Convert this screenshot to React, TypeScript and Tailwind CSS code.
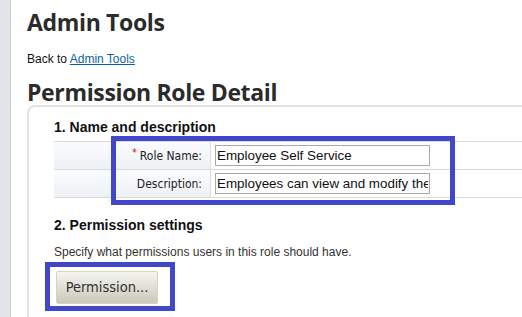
export default function App() {
  const heading = "font-['Open_Sans',sans-serif] font-bold text-[23px] leading-[28px] tracking-[-0.35px] text-[#2b2b2b]";
  const label = "font-['DejaVu_Sans_Condensed','DejaVu_Sans',sans-serif] text-[12px] text-[#222]";

  return (
    <div className="relative flex w-[522px] h-[317px] overflow-hidden bg-white font-['Liberation_Sans',Arial,sans-serif]">
      <div className="w-[11px] shrink-0 bg-[#e2e5e9] border-r border-[#c9ccd1]" />

      <div className="flex-1 pl-[16px]">
        <h1 className={`mt-[8px] ${heading}`}>Admin Tools</h1>
        <p className="mt-[15px] text-[12px] leading-[16px] text-[#111]">
          Back to{" "}
          <a href="#" className="text-[#0b5fa5] underline">
            Admin Tools
          </a>
        </p>
        <h1 className={`mt-[11px] ${heading}`}>Permission Role Detail</h1>

        <div className="mt-[-1px] w-[600px] h-[240px] border-t-2 border-l-2 border-[#e3e3e3] rounded-tl-[8px] pl-[25px]">
          <h2 className="mt-[11px] text-[14px] leading-[18px] font-bold text-[#111]">1. Name and description</h2>

          <div className="mt-[5px] border-b border-[#d9d9d9]">
            <div className="flex h-[28px] border-t border-[#d9d9d9]">
              <div className={`w-[157px] shrink-0 flex items-center justify-end pr-[8px] border-r border-[#dcdcdc] bg-linear-to-b from-[#fbfcfd] to-[#edf1f5] ${label}`}>
                <span className="text-[#e00000] text-[10px] mr-[3px] -translate-y-[3px]">*</span>
                Role Name:
              </div>
              <div className="flex items-center pl-[4px]">
                <input
                  defaultValue="Employee Self Service"
                  className="w-[215px] h-[21px] border border-[#a9a9a9] px-[1px] text-[13.4px] text-[#111] outline-none"
                />
              </div>
            </div>
            <div className="flex h-[28px] border-t border-[#d9d9d9]">
              <div className={`w-[157px] shrink-0 flex items-center justify-end pr-[8px] border-r border-[#dcdcdc] bg-linear-to-b from-[#fbfcfd] to-[#edf1f5] ${label}`}>
                Description:
              </div>
              <div className="flex items-center pl-[4px]">
                <input
                  defaultValue="Employees can view and modify their own information"
                  className="w-[215px] h-[21px] border border-[#a9a9a9] px-[1px] text-[13.4px] text-[#111] outline-none"
                />
              </div>
            </div>
          </div>

          <h2 className="mt-[18px] text-[14px] leading-[18px] font-bold text-[#111]">2. Permission settings</h2>
          <p className="mt-[10px] text-[12px] leading-[16px] text-[#333]">
            Specify what permissions users in this role should have.
          </p>
          <button className="mt-[11px] ml-[2px] w-[102px] h-[33px] rounded-[2px] border border-[#d6d6b4] bg-linear-to-b from-[#f5f5ef] to-[#c9c9bd] font-['DejaVu_Sans_Condensed','DejaVu_Sans',sans-serif] text-[14.5px] text-[#333]">
            Permission...
          </button>
        </div>
      </div>

      {/* annotation boxes */}
      <div className="absolute left-[111px] top-[136px] w-[344px] h-[69px] border-[5px] border-[#4048c9]" />
      <div className="absolute left-[45px] top-[262px] w-[130px] h-[49px] border-[5px] border-[#4048c9]" />
    </div>
  );
}
